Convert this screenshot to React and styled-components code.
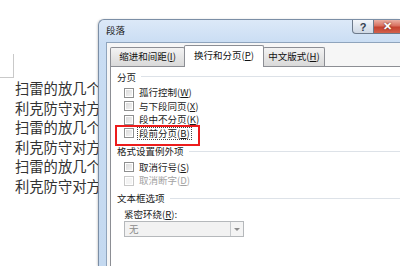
import React from 'react';
import styled, { createGlobalStyle } from 'styled-components';

const GlobalStyle = createGlobalStyle`
  html, body {
    margin: 0;
    padding: 0;
    background: #fff;
  }
  body {
    font-family: "Noto Sans CJK SC", "Liberation Sans", sans-serif;
  }
`;

const Screen = styled.div`
  display: flex;
  width: 400px;
  height: 266px;
  overflow: hidden;
  background: #fff;
`;

// the word document peeking out on the left
const DocPane = styled.div`
  width: 98px;
  flex: none;
  padding-top: 54px;
  overflow: hidden;
`;

const CornerMark = styled.div`
  width: 14px;
  height: 24px;
  box-sizing: border-box;
  border-right: 1px solid #c9c9c9;
  border-bottom: 1px solid #c9c9c9;
`;

const DocLine = styled.div`
  padding-left: 15px;
  font-size: 14.3px;
  line-height: 19.6px;
  color: #333;
  white-space: nowrap;
`;

// aero window
const Window = styled.div`
  flex: 1;
  margin-top: 19px;
  display: flex;
  flex-direction: column;
  border-top: 1px solid #7b8ea6;
  border-left: 1px solid #7b8ea6;
  border-top-left-radius: 6px;
  background: linear-gradient(#dce9f8, #c9ddf3 24px, #c4d9f0);
  box-shadow: -1px 0 2px rgba(0, 0, 0, 0.15);
`;

const TitleBar = styled.div`
  height: 22px;
  display: flex;
  align-items: flex-start;
`;

const Title = styled.div`
  padding: 4px 0 0 7px;
  font-size: 9.5px;
  line-height: 13px;
  color: #1a1a1a;
`;

const CaptionButton = styled.div`
  height: 14px;
  box-sizing: border-box;
  display: flex;
  align-items: center;
  justify-content: center;
  font-family: "Liberation Sans", sans-serif;
  font-weight: bold;
  border: 1px solid #6d7a8b;
  border-top: none;
`;

const HelpButton = styled(CaptionButton)`
  margin-left: auto;
  width: 22px;
  border-bottom-left-radius: 4px;
  background: linear-gradient(#f3f6fa, #dfe6ef 50%, #cfd8e4);
  color: #34404f;
  font-size: 11px;
`;

const CloseButton = styled(CaptionButton)`
  width: 26px;
  border-left: none;
  border-right: none;
  background: linear-gradient(#eab0a3, #d9705f 45%, #c5422f 55%, #d2614c);
  color: #fff;
  font-size: 11px;
  text-shadow: 0 0 2px #5a1a10;
`;

const Client = styled.div`
  flex: 1;
  margin-left: 7px;
  border-top: 1px solid #8fa4bc;
  border-left: 1px solid #8fa4bc;
  background: #f6f6f6;
  padding: 2px 0 0 3px;
  display: flex;
  flex-direction: column;
`;

const TabStrip = styled.div`
  display: flex;
  align-items: flex-end;
  height: 21px;
  position: relative;
  z-index: 1;
`;

const Tab = styled.div`
  width: ${p => p.$w}px;
  height: ${p => (p.$active ? 22 : 19)}px;
  margin-bottom: ${p => (p.$active ? -1 : 0)}px;
  margin-left: ${p => (p.$active ? -1 : 0)}px;
  margin-right: ${p => (p.$active ? -1 : 0)}px;
  box-sizing: border-box;
  border: 1px solid #8c8e94;
  border-bottom: none;
  border-radius: 2px 2px 0 0;
  background: ${p => (p.$active ? '#fff' : 'linear-gradient(#f3f3f3, #e6e6e6 50%, #d9d9d9)')};
  font-size: 9.5px;
  line-height: ${p => (p.$active ? 19 : 17)}px;
  text-align: center;
  color: #111;
  white-space: nowrap;
`;

const TabPage = styled.div`
  flex: 1;
  border-top: 1px solid #8c8e94;
  border-left: 1px solid #8c8e94;
  background: #fff;
  padding-left: 6px;
`;

const Heading = styled.div`
  display: flex;
  align-items: center;
  height: 13px;
  margin-top: ${p => p.$gap}px;
  font-size: 9.5px;
  color: #1a1a1a;

  &::after {
    content: '';
    flex: 1;
    height: 1px;
    margin-left: 5px;
    background: #dde2e8;
  }
`;

const Group = styled.div`
  padding: 3px 0 0 7px;
`;

const Row = styled.div`
  position: relative;
  display: flex;
  align-items: center;
  height: 13.5px;
  font-size: 9.5px;
  color: ${p => (p.$disabled ? '#a3a3a3' : '#1a1a1a')};
  white-space: nowrap;
`;

const Box = styled.span`
  width: 10px;
  height: 10px;
  box-sizing: border-box;
  flex: none;
  margin-right: 3px;
  border: 1px solid ${p => (p.$disabled ? '#c8c8c8' : '#8e8f8f')};
  background: ${p => (p.$disabled ? '#f4f4f4' : 'linear-gradient(135deg, #d8d8d8, #f6f6f6)')};
  box-shadow: inset 0 0 0 1px #fff;
`;

const Label = styled.span`
  padding: 0 1px;
  border: 1px ${p => (p.$focused ? 'dotted #444' : 'solid transparent')};
  line-height: 11px;
`;

const Key = styled.span`
  text-decoration: underline;
`;

const RedMark = styled.div`
  position: absolute;
  left: -9px;
  top: -2px;
  width: 85px;
  height: 21px;
  border: 2px solid #ec1c1c;
  box-sizing: border-box;
`;

const FieldLabel = styled.div`
  margin: 3px 0 0 7px;
  height: 13px;
  font-size: 9.5px;
  line-height: 13px;
  color: #1a1a1a;
`;

const Select = styled.div`
  margin: 0.5px 0 0 7px;
  width: 120px;
  height: 16px;
  box-sizing: border-box;
  display: flex;
  border: 1px solid #b5b8bb;
  background: #f2f2f2;
`;

const SelectValue = styled.div`
  flex: 1;
  padding-left: 4px;
  font-size: 9.5px;
  line-height: 14px;
  color: #8a8a8a;
`;

const SelectArrow = styled.div`
  width: 12px;
  display: flex;
  align-items: center;
  justify-content: center;
  border-left: 1px solid #c6c9cc;
  background: #f4f4f4;

  &::before {
    content: '';
    border-left: 3px solid transparent;
    border-right: 3px solid transparent;
    border-top: 3px solid #8c8c8c;
  }
`;

const docLines = ['扫雷的放几个', '利克防守对方', '扫雷的放几个', '利克防守对方', '扫雷的放几个', '利克防守对方'];

function Check({ text, hotkey, disabled, focused, marked }) {
  return (
    <Row $disabled={disabled}>
      <Box $disabled={disabled} />
      <Label $focused={focused}>
        {text}(<Key>{hotkey}</Key>)
      </Label>
      {marked ? <RedMark /> : null}
    </Row>
  );
}

export default function App() {
  return (
    <Screen>
      <GlobalStyle />
      <DocPane>
        <CornerMark />
        {docLines.map((line, i) => (
          <DocLine key={i}>{line}</DocLine>
        ))}
      </DocPane>

      <Window>
        <TitleBar>
          <Title>段落</Title>
          <HelpButton>?</HelpButton>
          <CloseButton>✕</CloseButton>
        </TitleBar>

        <Client>
          <TabStrip>
            <Tab $w={75}>缩进和间距(<Key>I</Key>)</Tab>
            <Tab $w={80} $active>换行和分页(<Key>P</Key>)</Tab>
            <Tab $w={62}>中文版式(<Key>H</Key>)</Tab>
          </TabStrip>

          <TabPage>
            <Heading $gap={3}>分页</Heading>
            <Group>
              <Check text="孤行控制" hotkey="W" />
              <Check text="与下段同页" hotkey="X" />
              <Check text="段中不分页" hotkey="K" />
              <Check text="段前分页" hotkey="B" focused marked />
            </Group>

            <Heading $gap={4.5}>格式设置例外项</Heading>
            <Group>
              <Check text="取消行号" hotkey="S" />
              <Check text="取消断字" hotkey="D" disabled />
            </Group>

            <Heading $gap={4}>文本框选项</Heading>
            <FieldLabel>
              紧密环绕(<Key>R</Key>):
            </FieldLabel>
            <Select>
              <SelectValue>无</SelectValue>
              <SelectArrow />
            </Select>
          </TabPage>
        </Client>
      </Window>
    </Screen>
  );
}
